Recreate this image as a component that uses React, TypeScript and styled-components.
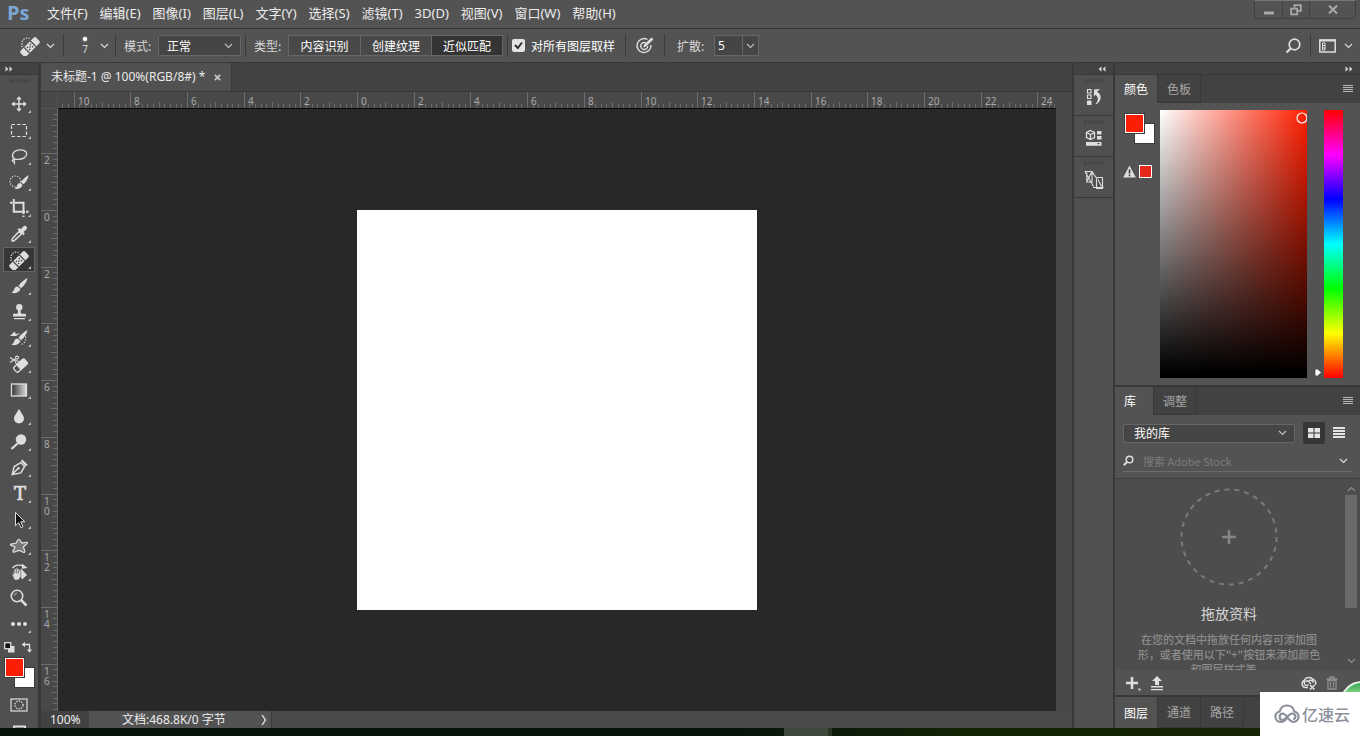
import React from 'react';
import styled, { createGlobalStyle, css } from 'styled-components';

const ui = '"Noto Sans", "Noto Sans CJK SC", sans-serif';
const cjk = '"Noto Sans CJK SC", "Noto Sans", sans-serif';

const c = {
  bar: '#535353',
  panel: '#505050',
  header: '#424242',
  ruler: '#484848',
  line: '#383838',
  edge: '#666666',
  field: '#454545',
  text: '#f0f0f0',
  label: '#d6d6d6',
  dim: '#a6a6a6',
  icon: '#dedede',
  red: '#fa1e05',
};

const GlobalStyle = createGlobalStyle`
  *, *::before, *::after { box-sizing: border-box; }
  body { margin: 0; background: ${c.bar}; overflow: hidden; }
  button, input, select { font: inherit; color: inherit; margin: 0; padding: 0; border: 0; background: none; border-radius: 0; }
  button:focus-visible, input:focus-visible, select:focus-visible { outline: 1px solid #8ab4e8; }
  svg { display: block; flex: none; }
`;

const Window = styled.div`
  display: flex;
  flex-direction: column;
  height: 100vh;
  font: 12px/16px ${cjk};
  color: ${c.text};
  background: ${c.bar};
`;

/* ---------- menu bar ---------- */

const MenuBar = styled.header`
  display: flex;
  flex: none;
  height: 28px;
  padding: 0 4px 0 7px;
  font: 13px/18px ${ui};
`;

const Logo = styled.span`
  width: 34px;
  font: bold 20px/26px "Open Sans", sans-serif;
  color: #7ba7d4;
`;

const Menus = styled.nav`
  display: flex;
  flex: 1;
  align-items: flex-start;
`;

const MenuButton = styled.button`
  height: 26px;
  padding: 0 6px;
  white-space: nowrap;
  color: #ececec;
`;

const WindowButtons = styled.div`
  display: flex;
  height: 19px;
  border: 1px solid #404040;
  border-top: 1px solid #777;
  border-radius: 0 0 4px 4px;
`;

const WindowButton = styled.button<{ $wide?: boolean }>`
  display: grid;
  place-items: center;
  width: ${p => (p.$wide ? 46 : 27)}px;
  color: #a9a9a9;
  & + & { border-left: 1px solid #404040; }
`;

/* ---------- options bar ---------- */

const OptionsBar = styled.div`
  display: flex;
  flex: none;
  height: 35px;
  border-top: 1px solid ${c.line};
  border-bottom: 1px solid ${c.line};
`;

const Spacer = styled.div`
  flex: 1;
`;

const Group = styled.div<{ $l?: number; $r?: number; $gap?: number; $last?: boolean }>`
  display: flex;
  align-items: center;
  gap: ${p => p.$gap ?? 6}px;
  padding: 0 ${p => p.$r ?? 8}px 0 ${p => p.$l ?? 8}px;
  color: ${c.text};
  ${p => !p.$last && css`
    border-right: 1px solid transparent;
    border-image: linear-gradient(transparent 16%, #3c3c3c 16%, #3c3c3c 84%, transparent 84%) 1;
  `}
`;

const OptionLabel = styled.label`
  width: 28px;
  white-space: nowrap;
  color: ${c.label};
`;

const IconButton = styled.button`
  display: grid;
  place-items: center;
  color: ${c.icon};
`;

const BrushPreview = styled.button`
  display: flex;
  flex-direction: column;
  align-items: center;
  width: 14px;
  font: 10px/16px ${ui};
  color: ${c.label};
  &::before {
    content: '';
    width: 4px;
    height: 4px;
    margin-top: 2px;
    border-radius: 50%;
    background: #fff;
    box-shadow: 0 0 2px #fff;
  }
`;

const SelectBox = styled.div<{ $w?: number; $h: number }>`
  display: grid;
  grid-template-columns: 1fr 16px;
  align-items: center;
  flex: ${p => (p.$w ? 'none' : 1)};
  width: ${p => (p.$w ? `${p.$w}px` : 'auto')};
  height: ${p => p.$h}px;
  border: 1px solid ${c.edge};
  border-radius: 2px;
  background: ${c.field};
  select {
    grid-area: 1 / 1 / 2 / 3;
    height: 100%;
    padding-left: ${p => (p.$w ? 8 : 10)}px;
    appearance: none;
    font: 12px/16px ${cjk};
    color: #fff;
  }
  svg { grid-area: 1 / 2; pointer-events: none; color: #c0c0c0; }
`;

const Segments = styled.div`
  display: flex;
  height: 21px;
  border: 1px solid ${c.edge};
`;

const Segment = styled.button<{ $on?: boolean }>`
  width: 71px;
  color: #fff;
  line-height: 18px;
  background: ${p => (p.$on ? '#343434' : '#484848')};
  & + & { border-left: 1px solid ${c.edge}; }
`;

const CheckLabel = styled.label`
  display: flex;
  align-items: center;
  gap: 6px;
  white-space: nowrap;
  color: #fff;
`;

const CheckBox = styled.span`
  display: grid;
  place-items: center;
  input, svg { grid-area: 1 / 1; }
  input { width: 13px; height: 13px; appearance: none; border-radius: 2px; background: #e4e4e4; }
  svg { pointer-events: none; }
`;

const NumberBox = styled.div`
  display: flex;
  height: 21px;
  border: 1px solid ${c.edge};
  background: ${c.field};
  input { width: 27px; padding-left: 3px; font: 12px/18px ${ui}; color: #fff; }
  button { display: grid; place-items: center; width: 16px; border-left: 1px solid ${c.edge}; color: #c0c0c0; }
`;

/* ---------- work area ---------- */

const Work = styled.main`
  display: flex;
  flex: 1;
  min-height: 0;
  gap: 2px;
  background: ${c.line};
`;

const Column = styled.section<{ $w: number }>`
  display: flex;
  flex: none;
  flex-direction: column;
  width: ${p => p.$w}px;
  min-height: 0;
  overflow: hidden;
  background: ${c.panel};
`;

const Collapse = styled.button<{ $right?: boolean }>`
  display: flex;
  flex: none;
  align-items: center;
  justify-content: ${p => (p.$right ? 'flex-end' : 'flex-start')};
  height: 12px;
  padding: 0 7px 0 5px;
  border-bottom: 1px solid ${c.line};
  background: ${c.header};
  color: #d0d0d0;
`;

const Grip = styled.div`
  flex: none;
  align-self: center;
  width: 19px;
  height: 4px;
  margin-top: 4px;
  background: repeating-linear-gradient(90deg, #414141 0 1px, transparent 1px 2px);
`;

const Tools = styled.div<{ $top: number }>`
  display: flex;
  flex-direction: column;
  align-items: center;
  gap: 1px;
  padding-top: ${p => p.$top}px;
`;

const Tool = styled.button<{ $on?: boolean; $flyout?: boolean }>`
  position: relative;
  display: grid;
  flex: none;
  place-items: center;
  width: 32px;
  height: 25px;
  border: 1px solid ${p => (p.$on ? '#646464' : 'transparent')};
  background: ${p => (p.$on ? '#363636' : 'none')};
  color: ${c.icon};
  ${p => p.$flyout && css`
    &::after {
      content: '';
      position: absolute;
      right: 3px;
      bottom: 2px;
      border: solid transparent;
      border-width: 0 0 3px 3px;
      border-bottom-color: #bdbdbd;
    }
  `}
`;

const MiniRow = styled.div`
  display: flex;
  justify-content: space-between;
  align-items: center;
  flex: none;
  height: 22px;
  padding: 0 5px 0 4px;
`;

const Swatches = styled.div<{ $left: number }>`
  display: grid;
  flex: none;
  width: 29px;
  height: 29px;
  margin-left: ${p => p.$left}px;
  button { grid-area: 1 / 1; width: 19px; height: 19px; border: 1px solid #fff; box-shadow: 0 0 0 1px #3c3c3c; }
`;

const Foreground = styled.button`
  z-index: 1;
  background: ${c.red};
`;

const Background = styled.button`
  place-self: end;
  background: #fff;
`;

const Document = styled.section`
  display: flex;
  flex: 1;
  flex-direction: column;
  min-width: 0;
  border-left: 1px solid ${c.line};
  background: ${c.ruler};
`;

const DocTabs = styled.div`
  display: flex;
  flex: none;
  height: 29px;
  border-bottom: 1px solid ${c.line};
  background: ${c.header};
`;

const DocTab = styled.div`
  display: flex;
  align-items: center;
  gap: 9px;
  padding: 0 10px;
  border-right: 1px solid ${c.line};
  background: #515151;
  font: 12px/18px ${ui};
  white-space: nowrap;
  color: #eaeaea;
  button { color: #c4c4c4; }
`;

const Sheet = styled.div`
  display: grid;
  flex: 1;
  grid-template: 17px minmax(0, 1fr) / 17px minmax(0, 1fr) 16px;
  min-height: 0;
`;

const Corner = styled.div`
  border-right: 1px dotted #5c5c5c;
  border-bottom: 1px dotted #5c5c5c;
`;

const RulerX = styled.div`
  display: flex;
  justify-content: center;
  overflow: hidden;
  border-bottom: 1px solid #0a0a0a;
`;

const RulerY = styled.div`
  display: flex;
  flex-direction: column;
  grid-column: 1;
  justify-content: center;
  overflow: hidden;
  border-right: 1px solid #6a6a6a;
`;

const Pasteboard = styled.div`
  display: grid;
  place-items: center;
  overflow: hidden;
  background: #282828;
`;

const Paper = styled.div`
  width: 400px;
  height: 400px;
  background: #fff;
`;

const StatusBar = styled.footer`
  display: flex;
  flex: none;
  height: 17px;
  background: #4b4b4b;
  font: 12px/16px ${ui};
  color: #ececec;
`;

const Zoom = styled.input`
  && { width: 48px; padding-left: 9px; background: ${c.header}; }
`;

const DocInfo = styled.button`
  && {
    display: flex;
    align-items: center;
    justify-content: space-between;
    width: 183px;
    padding: 0 4px 0 33px;
    border-right: 1px solid ${c.line};
    background: #535353;
    white-space: nowrap;
  }
`;

const DockItem = styled.button`
  && {
    display: flex;
    flex: none;
    flex-direction: column;
    align-items: center;
    gap: 4px;
    height: 41px;
    border-bottom: 1px solid ${c.line};
    color: ${c.icon};
  }
`;

/* ---------- right panels ---------- */

const Tabs = styled.div`
  display: flex;
  flex: none;
  align-items: stretch;
  height: 28px;
  padding-right: 7px;
  background: ${c.header};
`;

const Tab = styled.button<{ $on?: boolean }>`
  && {
    min-width: 39px;
    padding: 0 9px;
    border-right: 1px solid ${c.line};
    border-bottom: ${p => (p.$on ? 'none' : `1px solid ${c.line}`)};
    color: ${p => (p.$on ? '#fff' : c.dim)};
    background: ${p => (p.$on ? c.bar : 'none')};
    text-align: left;
  }
`;

const ColorPanel = styled.div`
  display: flex;
  flex: none;
  height: 284px;
  padding: 7px 17px 7px 8px;
  border-bottom: 2px solid ${c.line};
  background: ${c.bar};
`;

const ColorSide = styled.div`
  width: 37px;
  padding-top: 4px;
`;

const Gamut = styled.button`
  display: flex;
  align-items: center;
  gap: 3px;
  margin-top: 22px !important;
`;

const GamutChip = styled.span`
  width: 13px;
  height: 13px;
  border: 1px solid #fff;
  background: #e5281a;
`;

const ColorField = styled.div`
  display: flex;
  flex: 1;
  justify-content: flex-end;
  overflow: hidden;
  background: linear-gradient(transparent, #000 98%), linear-gradient(90deg, #fff, #ff1e00);
`;

const Marker = styled.div`
  display: flex;
  align-items: flex-end;
  justify-content: center;
  width: 17px;
  padding: 0 0 1px 4px;
`;

const Hue = styled.div`
  width: 19px;
  background: linear-gradient(#f00, #f0f, #00f, #0ff, #0f0, #ff0, #f00);
`;

const Library = styled.div`
  display: flex;
  flex: 1;
  flex-direction: column;
  min-height: 0;
  background: ${c.bar};
`;

const LibraryBar = styled.div`
  display: flex;
  flex: none;
  align-items: center;
  gap: 8px;
  padding: 7px 10px 0 8px;
`;

const Views = styled.div`
  display: flex;
  gap: 3px;
`;

const ViewButton = styled.button<{ $on?: boolean }>`
  && {
    display: grid;
    place-items: center;
    width: 22px;
    height: 22px;
    border-radius: 2px;
    background: ${p => (p.$on ? '#363636' : 'none')};
    color: #e4e4e4;
  }
`;

const Search = styled.div`
  display: flex;
  flex: none;
  align-items: center;
  gap: 9px;
  height: 22px;
  margin: 6px 8px;
  padding-right: 4px;
  border-bottom: 1px solid #6c6c6c;
  color: ${c.icon};
  input { flex: 1; min-width: 0; font: 11px/16px ${cjk}; }
  input::placeholder { color: #7b7b7b; opacity: 1; }
`;

const LibraryView = styled.div`
  display: flex;
  flex: 1;
  min-height: 0;
  border-top: 1px solid #404040;
  background: #4d4d4d;
`;

const Drop = styled.div`
  display: flex;
  flex: 1;
  flex-direction: column;
  align-items: center;
  padding: 9px 1px 0 0;
  overflow: hidden;
  h2 { flex: none; margin: 18px 0 10px; font: 14px/18px ${cjk}; color: ${c.label}; }
  p { flex: none; margin: 0; font: 500 11px/15px ${cjk}; text-align: center; white-space: nowrap; color: #8c8c8c; }
`;

const ScrollBar = styled.div`
  display: flex;
  flex-direction: column;
  align-items: center;
  width: 16px;
  padding: 7px 2px 6px 0;
  color: #8e8e8e;
`;

const Thumb = styled.div`
  width: 12px;
  height: 113px;
  margin: 3px 0 auto;
  background: #696969;
`;

const LibraryFooter = styled.div`
  display: flex;
  flex: none;
  align-items: center;
  gap: 9px;
  height: 26px;
  padding: 0 22px 0 10px;
  border-bottom: 1px solid ${c.line};
`;

const BottomTabs = styled(Tabs)`
  height: 32px;
  border-top: 1px solid ${c.line};
`;

const Taskbar = styled.div`
  display: flex;
  flex: none;
  justify-content: center;
  height: 8px;
  padding-left: 256px;
  background: linear-gradient(90deg, #04120a, #06150a 55%, #122205 70%, #142403);
  &::before { content: ''; width: 48px; background: #3f4a3d; border-right: 4px solid #2a3524; }
`;

/* ---------- overlays in the screen corner ---------- */

const Bubble = styled.div`
  position: fixed;
  right: -24px;
  bottom: 11px;
  width: 44px;
  height: 44px;
  border: 2px solid #e6f2e6;
  border-radius: 50%;
  background: linear-gradient(#35a853, #8fdc8f 12px, #6ccf7a);
`;

const Watermark = styled.div`
  position: fixed;
  right: 0;
  bottom: 0;
  display: flex;
  align-items: center;
  gap: 2px;
  width: 100px;
  height: 44px;
  padding-left: 14px;
  background: #fff;
  font: 500 16px/20px ${cjk};
  white-space: nowrap;
  color: #8b909b;
`;

/* ---------- icons ---------- */

type IconProps = { size?: number; w?: number; h?: number; children: React.ReactNode };
const Icon = ({ size = 20, w, h, children }: IconProps) => (
  <svg width={w ?? size} height={h ?? size} viewBox={`0 0 ${w ?? size} ${h ?? size}`} fill="none" stroke="currentColor" strokeWidth="1.3" aria-hidden="true">
    {children}
  </svg>
);
const solid = { fill: 'currentColor', stroke: 'none' };

const Chevron = ({ up }: { up?: boolean }) => (
  <Icon w={9} h={6}><path d={up ? 'M1 5l3.5-3.5L8 5' : 'M1 1l3.5 3.5L8 1'} strokeWidth="1.1" /></Icon>
);
const DoubleArrow = ({ left }: { left?: boolean }) => (
  <Icon w={8} h={6}>
    <path d={left ? 'M3.500.3v5.400L.5 3zM7.500.3v5.400L4.500 3z' : 'M.5.3v5.400L3.500 3zM4.500.3v5.400L7.500 3z'} {...solid} />
  </Icon>
);
const MenuLines = () => <Icon w={10} h={8}><path d="M0 .5h10M0 2.500h10M0 4.500h10M0 6.500h10" strokeWidth="1" stroke="#b8b8b8" /></Icon>;
const Bandage = () => (
  <Icon>
    <path d="M2 11V7.500A5.300 5.300 0 0 1 9.500 2.500" strokeDasharray="1.300 1.300" strokeWidth="1.300" />
    <g transform="rotate(-45 10 11)">
      <rect x="-1" y="7" width="22" height="8" rx="2" {...solid} />
      <path d="M5.500 7v8M14.500 7v8" stroke="#484848" strokeWidth="1.200" />
      <path d="M7.300 9.400h1.400M11.300 9.400h1.400M9.300 11h1.400M7.300 12.600h1.400M11.300 12.600h1.400" stroke="#484848" strokeWidth="1.400" />
    </g>
  </Icon>
);
const BrushShape = () => (
  <path d="M18.500 2c-3.500 1.500-7 5-9 7.800l2.600 2.400C15 9.800 17.800 6 18.500 2zM8.800 10.600c-2 0-3.100 1-3.600 2.700-.4 1.500-1.200 2.600-2.900 3.200 3.300 1.500 7.900.6 9.200-3.400z" {...solid} />
);

const tools: { name: string; icon: React.ReactNode; plain?: boolean }[] = [
  { name: '移动工具', icon: <Icon><path d="M10 4v12M4 10h12" strokeWidth="1.500" /><path d="M10 2.200L7.200 5.600h5.600zM10 17.800l-2.800-3.400h5.600zM2.200 10l3.400-2.800v5.600zM17.800 10l-3.400-2.800v5.600z" {...solid} /></Icon> },
  { name: '矩形选框工具', icon: <Icon><rect x="2.500" y="4.500" width="15" height="12" strokeDasharray="3.500 2" strokeWidth="1.200" /></Icon> },
  { name: '套索工具', icon: <Icon><path d="M5 12.500c-3-2.400-1.500-7 3.800-8.300 4.400-1.100 8.700.5 8.900 3.600.2 3.300-4 5.700-8.700 5.600-2.600 0-4.600-.4-5.500.5-.8.9.8 2.200 1.800 1.200 1-1.100-.5-2.600-.8-4M5 15c.8 1 .6 2.200.4 3.300" /></Icon> },
  { name: '快速选择工具', icon: <Icon><circle cx="6.500" cy="9.500" r="5.500" strokeDasharray="1.200 1.500" strokeWidth="1.200" /><path d="M19.700 3c-3 1.600-6.100 4.700-7.700 7.200l2.600 2c2.200-2 4.600-5.600 5.100-9.200zM11.300 11c-1.900 0-2.800 1-3.200 2.600-.3 1.400-1 2.300-2.500 2.800 3 1.200 6.600.4 7.900-3.300z" {...solid} /></Icon> },
  { name: '裁剪工具', icon: <Icon><path d="M4.800 1v12.800H16M1 4.800h2.500M6 4.800h8.500V16M14.500 17.500V19M17 13.800h2.500" strokeWidth="2" /></Icon> },
  { name: '吸管工具', icon: <Icon><path d="M10.200 7.200l-6.700 7.300c-.7 1.300-.5 2.500-.5 2.500s1.400.3 2.500-.6l7.200-6.700z" strokeWidth="1.500" /><path d="M8.600 5.500l1.500-1.500 1.700 1.200 2.400-2.700c2.200-2 5 .8 3.100 3L14.500 8l1.300 1.700-1.500 1.500z" {...solid} /></Icon> },
  { name: '污点修复画笔工具', icon: <Bandage /> },
  { name: '画笔工具', icon: <Icon><BrushShape /></Icon> },
  { name: '仿制图章工具', icon: <Icon><circle cx="10.300" cy="5.300" r="3.200" {...solid} /><path d="M9 7h2.600v3.500l.9 1.200H16c.7 0 1 .5 1 1.200v1.600H4v-1.600c0-.7.400-1.200 1-1.200h3.100l.9-1.200zM5 16h11v1.200H5z" {...solid} /></Icon> },
  { name: '历史记录画笔工具', icon: <Icon><path d="M1 8L5.500 3.500l1.500 2.700c1.200-.8 2.700-.8 4-.2-1.500 0-2.700.7-3.700 2z" {...solid} /><BrushShape /><path d="M16.500 8.500c1 3.300-.6 6.700-4.500 8.300" strokeDasharray="1.200 1.600" strokeWidth="1.200" /></Icon> },
  { name: '背景橡皮擦工具', icon: <Icon><circle cx="8" cy="3.600" r="1.500" strokeWidth="1.100" /><circle cx="8" cy="8.200" r="1.500" strokeWidth="1.100" /><path d="M1 3.500L6.800 7.200M1 8.500l5.800-3.800" strokeWidth="1.200" /><g transform="rotate(-42 11.500 12)"><rect x="4.500" y="8.500" width="14" height="6.500" rx="2" strokeWidth="1.300" /><rect x="9" y="8" width="10.500" height="7.500" rx="1.500" {...solid} /></g></Icon> },
  { name: '渐变工具', icon: <Icon><defs><linearGradient id="tool-gradient"><stop offset="0" stopColor="#333" /><stop offset="1" stopColor="#ddd" /></linearGradient></defs><rect x="2.500" y="4" width="15" height="12" fill="url(#tool-gradient)" /></Icon> },
  { name: '模糊工具', icon: <Icon><path d="M10 2.500c.8 3 5 6.700 5 10a5 5 0 0 1-10 0c0-3.300 4.200-7 5-10z" {...solid} /></Icon> },
  { name: '减淡工具', icon: <Icon><circle cx="12" cy="7.500" r="5.200" {...solid} /><path d="M8.500 11.500L2.500 17" strokeWidth="2.200" /></Icon> },
  { name: '钢笔工具', icon: <Icon><path d="M3.200 16.500l2-8 6.600-3.800 3.800 3.800-3.800 6.400zM3.500 16l5.300-5.300" strokeWidth="1.500" /><circle cx="9.500" cy="10.200" r="1.300" {...solid} /><path d="M11.800 3l1.500-1.500 5.400 5.200L17 8.400z" {...solid} /></Icon> },
  { name: '横排文字工具', icon: <Icon><text x="11" y="16" textAnchor="middle" fontFamily="DejaVu Serif" fontSize="18" fill="currentColor" strokeWidth=".7">T</text></Icon> },
  { name: '路径选择工具', icon: <Icon><path d="M6.500 2.500v13.200l3.200-3 2.300 5 2-1-2.300-4.900h4.200z" fill="#151515" strokeWidth="1" /></Icon> },
  { name: '自定形状工具', icon: <Icon><path d="M9.500 3.500c1.300-.4 2.300 2.300 3.200 3.500 2 .2 5.300-1.600 5.700-.3.500 1.300-3.400 2.900-4 4.500.2 1.700 2.300 4 1.200 5-1.200 1-3.500-1.600-5.500-1.900-2 .3-5 2.600-6 1.500-1-1.200 1.600-2.900 1.900-4.600C5.200 9.700 1.300 9.900 1.500 8.500c.3-1.400 3.700-.6 5.700-1.500.9-1.200 1-3.100 2.300-3.500z" fill="#777" /></Icon> },
  { name: '旋转视图工具', icon: <Icon><path d="M3.500 6C6 2.800 10.500 2.300 14 4" /><path d="M13 1.500L18.500 6l-5.500.8zM12 6.500l6 6.500-5 4.500-3-7z" {...solid} /><path d="M2.500 11.200l2 1.200V7.800h1.400V6.500h1.500v-.8h1.500v1.200h1.400V8h1.500v6.500L9.500 18h-4z" {...solid} stroke="#505050" strokeWidth=".6" /><path d="M5.900 8v3.500M7.700 7v4.500M9.400 8v3.500" stroke="#505050" strokeWidth=".7" /></Icon> },
  { name: '缩放工具', plain: true, icon: <Icon><circle cx="8" cy="8" r="5.700" strokeWidth="1.600" /><path d="M5.500 7.500c.2-1.300 1-2 2.300-2.200" strokeWidth="1" /><path d="M12 12l5.500 5.500" strokeWidth="2.500" /></Icon> },
  { name: '编辑工具栏', icon: <Icon><circle cx="4" cy="10" r="2" {...solid} /><circle cx="10" cy="10" r="2" {...solid} /><circle cx="16" cy="10" r="2" {...solid} /></Icon> },
];

/* Two centimetres on the rulers, in hundredths of a pixel, to keep the maths whole. */
const STEP = 5670;
const at = (i: number, part = 0) => Math.round((i * STEP + (part * STEP) / 10) / 100);
const marks = Array.from({ length: 33 }, (_, i) => i - 16);

type RulerProps = { vertical?: boolean; from: number; to: number };
const Ruler = ({ vertical, from, to }: RulerProps) => {
  const length = vertical ? 1600 : 2000;
  const zero = length / 2 - 200;
  return (
    <svg width={vertical ? 16 : length} height={vertical ? length : 16} fill="#a9a9a9" fontFamily="Noto Sans" fontSize="10" role="img" aria-label={vertical ? '垂直标尺' : '水平标尺'}>
      {marks.map(i => {
        const start = zero + at(i);
        const label = i * 2 < from || i * 2 > to ? '' : String(Math.abs(i * 2));
        return (
          <g key={i}>
            {Array.from({ length: 10 }, (_, part) => {
              const pos = zero + at(i, part);
              const size = part === 0 ? 16 : part === 5 ? 6 : 4;
              return vertical
                ? <rect key={part} x={16 - size} y={pos} width={size} height="1" fill="#6c6c6c" />
                : <rect key={part} x={pos} y={16 - size} width="1" height={size} fill="#6c6c6c" />;
            })}
            {vertical
              ? label.split('').map((digit, n) => <text key={n} x="3" y={start + 11 + n * 10}>{digit}</text>)
              : label && <text x={start + 4} y="13">{label}</text>}
          </g>
        );
      })}
    </svg>
  );
};

const menus = ['文件(F)', '编辑(E)', '图像(I)', '图层(L)', '文字(Y)', '选择(S)', '滤镜(T)', '3D(D)', '视图(V)', '窗口(W)', '帮助(H)'];

export default function App() {
  return (
    <Window>
      <GlobalStyle />
      <MenuBar>
        <Logo>Ps</Logo>
        <Menus>{menus.map(m => <MenuButton key={m}>{m}</MenuButton>)}</Menus>
        <WindowButtons>
          <WindowButton aria-label="最小化"><Icon w={12} h={12}><path d="M1 9h10" strokeWidth="3" /></Icon></WindowButton>
          <WindowButton aria-label="还原"><Icon w={12} h={12}><path d="M4.500 3.500V1.200h6.300v5.600H8M1.200 4.700h6v5.600h-6z" strokeWidth="1.800" /></Icon></WindowButton>
          <WindowButton $wide aria-label="关闭"><Icon w={12} h={12}><path d="M2 1.500l8 8M10 1.500l-8 8" strokeWidth="2" /></Icon></WindowButton>
        </WindowButtons>
      </MenuBar>

      <OptionsBar>
        <Group $l={20}>
          <IconButton aria-label="当前工具"><Bandage /></IconButton>
          <IconButton aria-label="工具预设"><Chevron /></IconButton>
        </Group>
        <Group $l={14} $gap={8} $r={6}>
          <BrushPreview>7</BrushPreview>
          <IconButton aria-label="画笔选项"><Chevron /></IconButton>
        </Group>
        <Group $r={4}>
          <OptionLabel htmlFor="mode">模式:</OptionLabel>
          <SelectBox $w={83} $h={21}>
            <select id="mode"><option>正常</option></select>
            <Chevron />
          </SelectBox>
        </Group>
        <Group $r={4}>
          <OptionLabel as="span">类型:</OptionLabel>
          <Segments>
            <Segment>内容识别</Segment>
            <Segment>创建纹理</Segment>
            <Segment $on>近似匹配</Segment>
          </Segments>
        </Group>
        <Group $l={4} $r={10}>
          <CheckLabel>
            <CheckBox>
              <input type="checkbox" defaultChecked />
              <Icon w={11} h={11}><path d="M2 5l2.800 3L9 2.500" stroke="#333" strokeWidth="2" /></Icon>
            </CheckBox>
            对所有图层取样
          </CheckLabel>
        </Group>
        <Group $l={9} $r={9}>
          <IconButton aria-label="绘图板压力控制大小">
            <Icon>
              <path d="M12.500 3.500A7 7 0 1 0 16 9" strokeWidth="1.400" />
              <path d="M11 7a3.500 3.500 0 1 0 1.700 3" strokeWidth="1.400" />
              <path d="M8 11.500l1.200-3L16.500 1.500l2 1.700-7.500 7.300z" {...solid} />
            </Icon>
          </IconButton>
        </Group>
        <Group $l={12} $gap={9} $last>
          <OptionLabel htmlFor="spread">扩散:</OptionLabel>
          <NumberBox>
            <input id="spread" defaultValue="5" />
            <button aria-label="扩散滑块"><Chevron /></button>
          </NumberBox>
        </Group>
        <Spacer />
        <Group>
          <IconButton aria-label="搜索">
            <Icon w={18} h={18}><circle cx="10.500" cy="7.500" r="5.300" strokeWidth="1.700" /><path d="M7 11.200L2.500 15.500" strokeWidth="2.200" /></Icon>
          </IconButton>
        </Group>
        <Group $gap={8} $r={7} $last>
          <IconButton aria-label="选择工作区">
            <Icon w={17} h={14}><rect x=".8" y="1" width="15.400" height="12" strokeWidth="1.500" /><path d="M1 1.500h15" strokeWidth="2" /><path d="M3.500 4h2.500v7h-2.500zM3.500 6.500h2.500M3.500 9h2.500" strokeWidth="1" /></Icon>
          </IconButton>
          <IconButton aria-label="工作区菜单"><Chevron /></IconButton>
        </Group>
      </OptionsBar>

      <Work>
        <Column $w={38}>
          <Collapse aria-label="展开工具栏"><DoubleArrow /></Collapse>
          <Grip />
          <Tools $top={8}>
            {tools.map((t, i) => (
              <Tool key={t.name} $on={i === 6} $flyout={!t.plain} aria-label={t.name}>{t.icon}</Tool>
            ))}
          </Tools>
          <MiniRow>
            <IconButton aria-label="默认前景色和背景色">
              <Icon w={11} h={11}><rect x="4" y="4" width="6.500" height="6.500" {...solid} /><rect x=".7" y=".7" width="6" height="6" fill="#111" /></Icon>
            </IconButton>
            <IconButton aria-label="切换前景色和背景色">
              <Icon w={12} h={12}><path d="M2 3.500h6.500V10" /><path d="M4 .8v5.400L.8 3.500zM5.800 8.500h5.400L8.500 11.700z" {...solid} /></Icon>
            </IconButton>
          </MiniRow>
          <Swatches $left={5}>
            <Foreground aria-label="前景色" />
            <Background aria-label="背景色" />
          </Swatches>
          <Tools $top={5}>
            <Tool aria-label="快速蒙版"><Icon><rect x="2" y="4" width="16" height="12" strokeWidth="1.200" /><circle cx="10" cy="10" r="4" strokeDasharray="1.300 1.300" /></Icon></Tool>
            <Tool aria-label="屏幕模式"><Icon><path d="M5 13V5.500h11V13" strokeWidth="2" /></Icon></Tool>
          </Tools>
        </Column>

        <Document>
          <DocTabs>
            <DocTab>
              未标题-1 @ 100%(RGB/8#) *
              <button aria-label="关闭文档"><Icon w={7} h={7}><path d="M.8.8l5.400 5.400M6.200.8L.8 6.200" strokeWidth="1.800" /></Icon></button>
            </DocTab>
          </DocTabs>
          <Sheet>
            <Corner />
            <RulerX><Ruler from={-10} to={24} /></RulerX>
            <RulerY><Ruler vertical from={-2} to={16} /></RulerY>
            <Pasteboard><Paper /></Pasteboard>
          </Sheet>
          <StatusBar>
            <Zoom aria-label="缩放比例" defaultValue="100%" />
            <DocInfo>文档:468.8K/0 字节<Icon w={6} h={12}><path d="M1 1l3.500 5L1 11" /></Icon></DocInfo>
          </StatusBar>
        </Document>

        <Column $w={39}>
          <Collapse $right aria-label="展开面板"><DoubleArrow left /></Collapse>
          <DockItem aria-label="历史记录">
            <Grip />
            <Icon><path d="M3.500 2.500h3.500v3.500h-3.500zM3.500 8h3.500v3.500h-3.500z" strokeWidth="1.200" /><path d="M3 13.500h4.500V18H3z" {...solid} /><path d="M10 2.500l6-.5-3 2.800c4.500 2.500 5 7.500 1 11.200-1 1-2 1-2.500.8 3.500-3.300 3-7-.3-9L9.800 10z" {...solid} /></Icon>
          </DockItem>
          <DockItem aria-label="属性">
            <Grip />
            <Icon><path d="M6.500 2.500l4 2v5l-4 2-4-2v-5zM2.500 4.500l4 2 4-2M6.500 6.500v5" /><path d="M13 3h4.500v3.500H13zM13 8h4.500v3.500H13zM2 14h15.500v3.800H2z" {...solid} /><path d="M13 15l1.500 1.500L16 15z" fill="#444" stroke="none" /></Icon>
          </DockItem>
          <DockItem aria-label="字形">
            <Grip />
            <Icon><path d="M1 2.500h7v10.500H2.800V3.500M1 2.500l8.500 15M8 2.500l5 7.500M3 12l4.500-8.500M12.500 8.500h6v11h-6zM9 18.500h10.500M14 10.500l3.500 7" strokeWidth="1.100" /></Icon>
          </DockItem>
        </Column>

        <Column $w={245}>
          <Collapse $right aria-label="折叠面板"><DoubleArrow /></Collapse>
          <Tabs>
            <Tab $on>颜色</Tab>
            <Tab>色板</Tab>
            <Spacer />
            <IconButton aria-label="颜色面板菜单"><MenuLines /></IconButton>
          </Tabs>
          <ColorPanel>
            <ColorSide>
              <Swatches $left={2}>
                <Foreground aria-label="前景色" />
                <Background aria-label="背景色" />
              </Swatches>
              <Gamut aria-label="色域警告">
                <Icon w={13} h={13}><path d="M6.500.5L12.800 12.500H.2z" fill={c.icon} stroke="none" /><path d="M6.500 4.500v4M6.500 9.500v1.700" stroke="#333" strokeWidth="1.500" /></Icon>
                <GamutChip />
              </Gamut>
            </ColorSide>
            <ColorField role="img" aria-label="饱和度与亮度">
              <Icon w={12} h={16}><circle cx="7" cy="8" r="5" stroke="#fff" strokeWidth="1.200" /></Icon>
            </ColorField>
            <Marker><Icon w={8} h={9}><path d="M1 1h2.500L7.500 4.500 3.500 8H1z" fill="#fff" stroke="#333" strokeWidth=".7" /></Icon></Marker>
            <Hue role="img" aria-label="色相" />
          </ColorPanel>

          <Library>
            <Tabs>
              <Tab $on>库</Tab>
              <Tab>调整</Tab>
              <Spacer />
              <IconButton aria-label="库面板菜单"><MenuLines /></IconButton>
            </Tabs>
            <LibraryBar>
              <SelectBox $h={19}>
                <select aria-label="库"><option>我的库</option></select>
                <Chevron />
              </SelectBox>
              <Views>
                <ViewButton $on aria-label="网格视图"><Icon w={12} h={12}><path d="M0 1h5.500v4.500H0zM6.500 1H12v4.500H6.500zM0 6.500h5.500V11H0zM6.500 6.500H12V11H6.500z" {...solid} /></Icon></ViewButton>
                <ViewButton aria-label="列表视图"><Icon w={12} h={12}><path d="M0 1h12M0 4h12M0 7h12M0 10h12" strokeWidth="2" /></Icon></ViewButton>
              </Views>
            </LibraryBar>
            <Search>
              <Icon w={11} h={11}><circle cx="6.500" cy="4.500" r="3.300" strokeWidth="1.500" /><path d="M4 7L.8 10.200" strokeWidth="2" /></Icon>
              <input aria-label="搜索" placeholder="搜索 Adobe Stock" />
              <Chevron />
            </Search>
            <LibraryView>
              <Drop>
                <Icon w={98} h={98}>
                  <circle cx="49" cy="49" r="47.500" stroke="#7a7a7a" strokeWidth="2" strokeDasharray="5 4.950" />
                  <path d="M49 42v14M42 49h14" stroke="#858585" strokeWidth="2.500" />
                </Icon>
                <h2>拖放资料</h2>
                <p>在您的文档中拖放任何内容可添加图<br />形，或者使用以下"+"按钮来添加颜色<br />和图层样式等。</p>
              </Drop>
              <ScrollBar><Chevron up /><Thumb /><Chevron /></ScrollBar>
            </LibraryView>
            <LibraryFooter>
              <IconButton aria-label="添加内容"><Icon w={16} h={16}><path d="M7 2v12M1 8h12" strokeWidth="2.500" /><path d="M13.500 13.500h2v2h-2z" {...solid} /></Icon></IconButton>
              <IconButton aria-label="上传"><Icon w={14} h={16}><path d="M7 1l5 5H9v4H5V6H2zM1 11h12v1.400H1zM1 14h12v1.200H1z" {...solid} /></Icon></IconButton>
              <Spacer />
              <IconButton aria-label="同步状态"><Icon w={17} h={16}><path d="M8 12.500H5A4 4 0 0 1 4.500 5C6 2 11 1.500 13 4.500c3 .5 3.500 4 2 5.500M8.500 9.500A2.300 2.300 0 1 1 8 6.300L11 9M8.500 6.500c1.500-2 5-1.200 5 1.300" strokeWidth="1.500" /><path d="M10 10l4.500 4.500M14.500 10L10 14.500" strokeWidth="1.600" /></Icon></IconButton>
              <IconButton aria-label="删除"><Icon w={12} h={14}><path d="M.5 3h11M4 2.500V1h4v1.500M2 4.500h8v8.500H2zM4.500 6v5.500M7.500 6v5.500" stroke="#8d8d8d" /></Icon></IconButton>
            </LibraryFooter>
          </Library>
          <BottomTabs>
            <Tab $on>图层</Tab>
            <Tab>通道</Tab>
            <Tab>路径</Tab>
          </BottomTabs>
        </Column>
      </Work>

      <Taskbar />
      <Bubble />
      <Watermark>
        <svg width="26" height="20" viewBox="0 0 26 20" fill="none" stroke="#8b909b" strokeWidth="2.200" aria-hidden="true">
          <path d="M12.500 14.500c-1.500 2.500-3.500 3.500-6 3.500a5.300 5.300 0 0 1-.8-10.500C6.500 3.500 9.500 1.500 13 1.500s6.500 2 7.200 6a5.300 5.300 0 0 1-.7 10.500c-5.500 0-6.500-8.500-11-8.500a3.300 3.300 0 0 0-.2 6.500c4.500 0 5.700-6.800 10.200-6.500 4 .5 3.500 5.500.7 5.500" />
        </svg>
        亿速云
      </Watermark>
    </Window>
  );
}
